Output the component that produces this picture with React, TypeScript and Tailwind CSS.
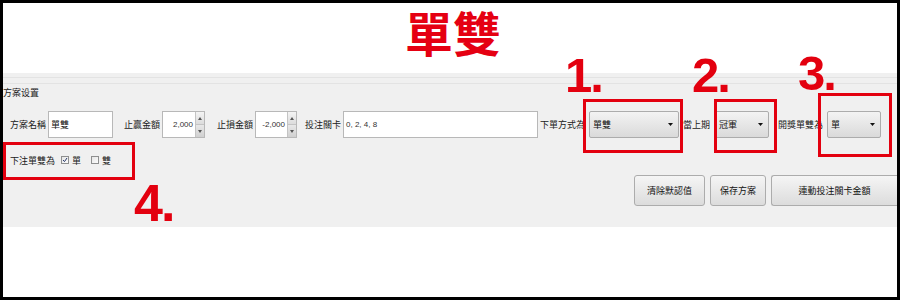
import React from 'react';

const cjk = { fontFamily: '"Noto Sans CJK TC", "Noto Sans", sans-serif' };

const Label: React.FC<{ text: string; w: string; ml?: string }> = ({ text, w, ml = '' }) => (
  <div className={`${w} ${ml} text-[9px] leading-none text-[#1a1a1a] whitespace-nowrap`}>{text}</div>
);

const Spin: React.FC<{ value: string; w: string }> = ({ value, w }) => (
  <div className={`${w} h-[27px] flex bg-white border border-[#b8b8b8]`}>
    <div className="flex-1 flex items-center justify-end pr-[2px] text-[8px] text-[#333]" style={{ fontFamily: '"Liberation Sans", sans-serif' }}>
      {value}
    </div>
    <div className="w-[9px] flex flex-col">
      <div className="flex-1 flex items-center justify-center bg-gradient-to-b from-[#f4f4f4] to-[#dcdcdc] border-l border-b border-[#c4c4c4]">
        <svg width="4" height="3" viewBox="0 0 4 3"><path d="M2 0 L4 3 L0 3 Z" fill="#555" /></svg>
      </div>
      <div className="flex-1 flex items-center justify-center bg-gradient-to-b from-[#e8e8e8] to-[#d0d0d0] border-l border-[#c4c4c4]">
        <svg width="4" height="3" viewBox="0 0 4 3"><path d="M0 0 L4 0 L2 3 Z" fill="#555" /></svg>
      </div>
    </div>
  </div>
);

const Select: React.FC<{ value: string; w: string }> = ({ value, w }) => (
  <div className={`${w} h-[27px] flex items-center justify-between pl-[3px] pr-[5px] rounded-[2px] border border-[#acacac] bg-gradient-to-b from-[#f3f3f3] to-[#dadada] text-[9px] text-[#111]`}>
    <span>{value}</span>
    <svg width="5" height="3" viewBox="0 0 5 3"><path d="M0 0 L5 0 L2.5 3 Z" fill="#111" /></svg>
  </div>
);

const Check: React.FC<{ checked?: boolean }> = ({ checked }) => (
  <div className="w-[8px] h-[8px] border border-[#8e8f8f] bg-gradient-to-br from-[#e6e6e6] to-[#fbfbfb] flex items-center justify-center">
    {checked && (
      <svg width="6" height="6" viewBox="0 0 6 6"><path d="M1 3 L2.5 4.6 L5 1" stroke="#2a3a6a" strokeWidth="1" fill="none" /></svg>
    )}
  </div>
);

const Btn: React.FC<{ text: string; w: string; extra?: string }> = ({ text, w, extra = '' }) => (
  <div className={`${w} h-[31px] flex items-center justify-center rounded-[3px] border border-[#acacac] bg-gradient-to-b from-[#f5f5f5] to-[#dcdcdc] text-[9px] text-[#111] ${extra}`}>
    {text}
  </div>
);

const Box: React.FC<{ cls: string }> = ({ cls }) => (
  <div className={`absolute border-[3px] border-[#e3000f] ${cls}`} />
);

const Num: React.FC<{ text: string; cls: string }> = ({ text, cls }) => (
  <div className={`absolute leading-none font-bold tracking-[-2px] text-[#e3000f] ${cls}`} style={{ fontFamily: '"Liberation Sans", sans-serif' }}>
    {text}
  </div>
);

export default function App() {
  return (
    <div className="w-[900px] h-[300px] border-[3px] border-black bg-white relative" style={cjk}>
      <div className="h-[70px] flex justify-center items-start pl-[6px]">
        <h1 className="px-[6px] text-[48px] leading-[1.2] font-bold text-[#e50012] whitespace-nowrap">單雙</h1>
      </div>

      <div className="h-[154px] bg-[#f0f0f0] flex flex-col">
        <div className="h-[4px]" />
        <div className="h-px bg-[#e3e3e3]" />
        <div className="h-[5px]" />
        <div className="h-px bg-[#e3e3e3]" />
        <div className="h-[16px] flex items-center text-[9px] text-[#1a1a1a] leading-none">方案设置</div>

        <div className="mt-[11px] h-[27px] flex items-center pl-[7px]">
          <Label text="方案名稱" w="w-[38px]" />
          <div className="w-[65px] h-[27px] bg-white border border-[#b8b8b8] flex items-center pl-[2px] text-[9px] text-[#111]">單雙</div>
          <Label text="止贏金額" w="w-[38px]" ml="ml-[11px]" />
          <Spin value="2,000" w="w-[43px]" />
          <Label text="止損金額" w="w-[38px]" ml="ml-[12px]" />
          <Spin value="-2,000" w="w-[42px]" />
          <Label text="投注關卡" w="w-[38px]" ml="ml-[8px]" />
          <div className="w-[195px] h-[27px] bg-white border border-[#b8b8b8] flex items-center pl-[2px] text-[8px] text-[#333]" style={{ fontFamily: '"Liberation Sans", sans-serif' }}>
            0, 2, 4, 8
          </div>
          <Label text="下單方式為" w="w-[49px]" ml="ml-[2px]" />
          <Select value="單雙" w="w-[90px]" />
          <Label text="當上期" w="w-[32px]" ml="ml-[4px]" />
          <Select value="冠軍" w="w-[54px]" />
          <Label text="開獎單雙為" w="w-[49px]" ml="ml-[9px]" />
          <Select value="單" w="w-[54px]" />
        </div>

        <div className="mt-[14px] h-[16px] flex items-center pl-[7px] text-[9px] text-[#1a1a1a] leading-none">
          <span className="w-[51px]">下注單雙為</span>
          <Check checked />
          <span className="ml-[3px] w-[19px]">單</span>
          <Check />
          <span className="ml-[3px]">雙</span>
        </div>

        <div className="mt-[7px] flex justify-end gap-[5px]">
          <Btn text="清除默認值" w="w-[71px]" />
          <Btn text="保存方案" w="w-[56px]" />
          <Btn text="連動投注關卡金額" w="w-[126px]" extra="rounded-r-none border-r-0" />
        </div>
      </div>

      <Box cls="left-[580px] top-[96px] w-[100px] h-[54px]" />
      <Box cls="left-[711px] top-[96px] w-[63px] h-[54px]" />
      <Box cls="left-[815px] top-[90px] w-[74px] h-[64px]" />
      <Box cls="left-0 top-[139px] w-[132px] h-[38px]" />

      <Num text="1." cls="left-[562px] top-[48px] text-[49px]" />
      <Num text="2." cls="left-[689px] top-[48px] text-[49px]" />
      <Num text="3." cls="left-[795px] top-[46px] text-[49px]" />
      <Num text="4." cls="left-[131px] top-[174px] text-[52px]" />
    </div>
  );
}
